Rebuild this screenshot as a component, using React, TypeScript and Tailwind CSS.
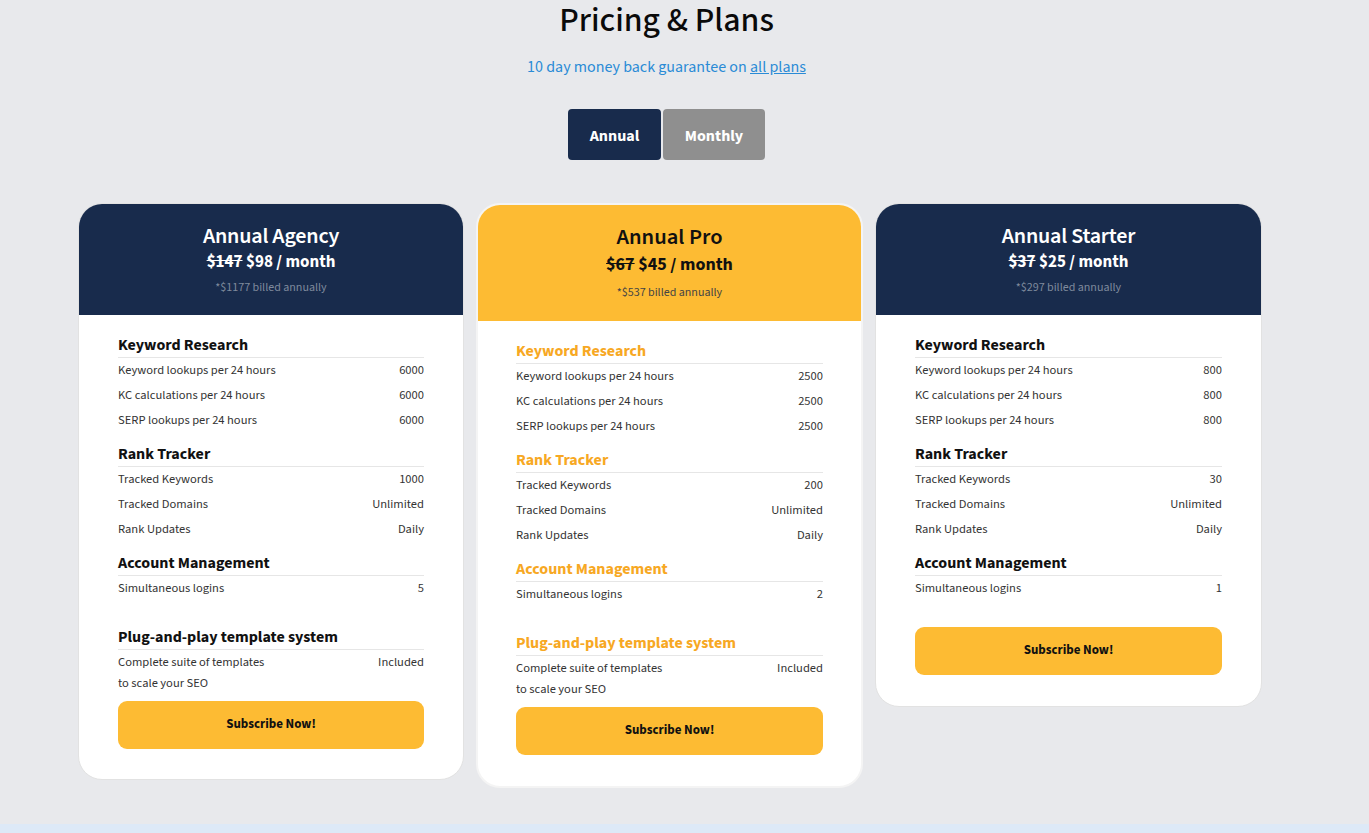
import React from "react";

type Row = { label: React.ReactNode; value: string };
type Section = { title: string; rows: Row[]; mt: string };

const FONT = { fontFamily: '"Source Sans Pro", "Source Sans 3", Lato, "Noto Sans", sans-serif' };

function Sections({ sections, pro }: { sections: Section[]; pro?: boolean }) {
  return (
    <>
      {sections.map((s, i) => (
        <div key={i} className={s.mt}>
          <div
            className={`text-[16px] font-bold leading-[22px] pb-[1px] border-b border-[#e6e6e6] ${
              pro ? "text-[#f7a823]" : "text-[#111]"
            }`}
          >
            {s.title}
          </div>
          {s.rows.map((r, j) => (
            <div key={j} className="flex justify-between items-start py-[2px] text-[12.5px] leading-[21px] text-[#333]">
              <div>{r.label}</div>
              <div>{r.value}</div>
            </div>
          ))}
        </div>
      ))}
    </>
  );
}

function buildSections(kw: string, tk: string, logins: string, withPlug: boolean): Section[] {
  const s: Section[] = [
    {
      title: "Keyword Research",
      mt: "mt-0",
      rows: [
        { label: "Keyword lookups per 24 hours", value: kw },
        { label: "KC calculations per 24 hours", value: kw },
        { label: "SERP lookups per 24 hours", value: kw },
      ],
    },
    {
      title: "Rank Tracker",
      mt: "mt-[9.5px]",
      rows: [
        { label: "Tracked Keywords", value: tk },
        { label: "Tracked Domains", value: "Unlimited" },
        { label: "Rank Updates", value: "Daily" },
      ],
    },
    {
      title: "Account Management",
      mt: "mt-[10.5px]",
      rows: [{ label: "Simultaneous logins", value: logins }],
    },
  ];
  if (withPlug) {
    s.push({
      title: "Plug-and-play template system",
      mt: "mt-[24.5px]",
      rows: [
        {
          label: (
            <>
              Complete suite of templates
              <br />
              to scale your SEO
            </>
          ),
          value: "Included",
        },
      ],
    });
  }
  return s;
}

function SubscribeButton({ mt }: { mt: string }) {
  return (
    <button
      className={`${mt} w-full h-[48px] rounded-[9px] bg-[#fdbb33] text-[#111] text-[13px] font-bold flex items-center justify-center`}
    >
      Subscribe Now!
    </button>
  );
}

export default function App() {
  return (
    <div style={FONT} className="min-h-[833px] bg-[#e8e9ec] flex flex-col">
      <div className="w-[1340px] flex flex-col items-center pb-[36px]">
        <div className="self-start w-[1333px] flex flex-col items-center">
          <h1 className="text-[34px] leading-[41px] font-medium text-[#0a0a0a]">Pricing &amp; Plans</h1>
          <p className="mt-[15px] text-[16px] leading-[22px] text-[#2a8bd6]">
            10 day money back guarantee on <span className="underline">all plans</span>
          </p>
          <div className="mt-[31px] flex gap-[2px]">
            <button className="w-[93px] h-[51px] pt-[2px] rounded-[4px] bg-[#182b4c] text-white text-[16px] font-bold">
              Annual
            </button>
            <button className="w-[102px] h-[51px] pt-[2px] rounded-[4px] bg-[#8f8f8f] text-white text-[16px] font-bold">
              Monthly
            </button>
          </div>
        </div>

        <div className="mt-[43px] flex items-start gap-[12px]">
          {/* Agency */}
          <div className="w-[386px] bg-white rounded-[24px] border border-[#e2e2e2] overflow-hidden">
            <div className="bg-[#182b4c] h-[111px] pt-[18px] flex flex-col items-center text-white">
              <div className="text-[22px] leading-[28px] font-semibold tracking-[-0.2px]">Annual Agency</div>
              <div className="text-[17px] leading-[24px] font-bold">
                <span className="line-through">$147</span> $98 / month
              </div>
              <div className="mt-[5px] text-[12px] leading-[18px] text-[#7f8a9c]">*$1177 billed annually</div>
            </div>
            <div className="px-[39px] pt-[19px] pb-[30px]">
              <Sections sections={buildSections("6000", "1000", "5", true)} />
              <SubscribeButton mt="mt-[5px]" />
            </div>
          </div>

          {/* Pro */}
          <div className="w-[387px] bg-white rounded-[24px] border-2 border-[#f4f4f4] overflow-hidden">
            <div className="bg-[#fdbb33] h-[116px] pt-[18px] flex flex-col items-center text-[#111]">
              <div className="text-[22.5px] leading-[29px] font-semibold">Annual Pro</div>
              <div className="text-[18px] leading-[24px] font-bold pt-[1px]">
                <span className="line-through">$67</span> $45 / month
              </div>
              <div className="mt-[7px] text-[12px] leading-[18px] text-[#444]">*$537 billed annually</div>
            </div>
            <div className="px-[38px] pt-[19px] pb-[31px]">
              <Sections pro sections={buildSections("2500", "200", "2", true)} />
              <SubscribeButton mt="mt-[5px]" />
            </div>
          </div>

          {/* Starter */}
          <div className="w-[387px] bg-white rounded-[24px] border border-[#e2e2e2] overflow-hidden">
            <div className="bg-[#182b4c] h-[111px] pt-[18px] flex flex-col items-center text-white">
              <div className="text-[22px] leading-[28px] font-semibold tracking-[-0.2px]">Annual Starter</div>
              <div className="text-[17px] leading-[24px] font-bold">
                <span className="line-through">$37</span> $25 / month
              </div>
              <div className="mt-[5px] text-[12px] leading-[18px] text-[#7f8a9c]">*$297 billed annually</div>
            </div>
            <div className="px-[39px] pt-[19px] pb-[31px]">
              <Sections sections={buildSections("800", "30", "1", false)} />
              <SubscribeButton mt="mt-[26px]" />
            </div>
          </div>
        </div>
      </div>
      <div className="flex-1 bg-[#dde9f7]"></div>
    </div>
  );
}
